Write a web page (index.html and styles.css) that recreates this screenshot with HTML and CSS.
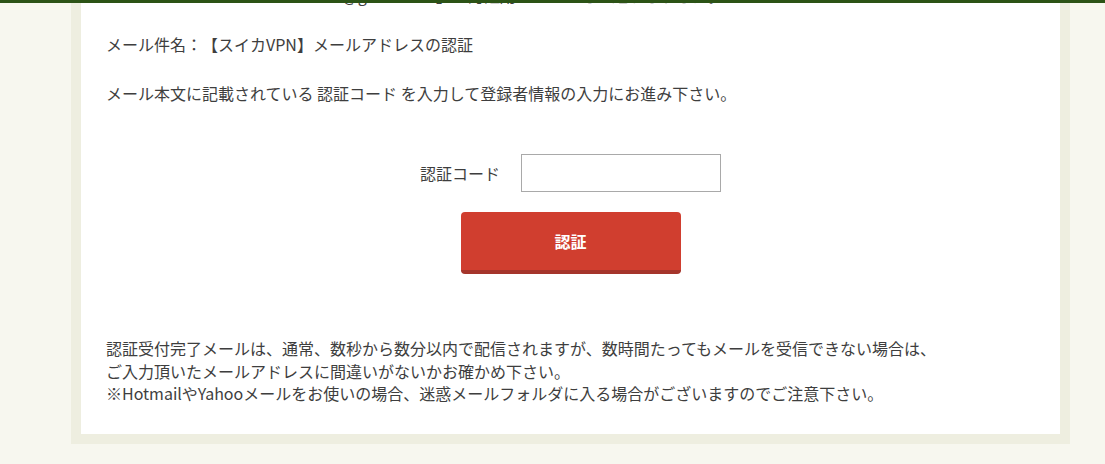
FILE: index.html
```html
<!DOCTYPE html>
<html lang="ja">
<head>
<meta charset="utf-8">
<title>メールアドレスの認証</title>
<link rel="stylesheet" href="styles.css">
</head>
<body>
<div class="topbar"></div>
<main class="card">
  <div class="intro">
    <p>メールアドレス「tokutaro20011@gmail.com」へ認証用のメールをお送りしました。</p>
    <p>メール件名：【スイカVPN】メールアドレスの認証</p>
    <p>メール本文に記載されている 認証コード を入力して登録者情報の入力にお進み下さい。</p>
  </div>
  <form class="verify">
    <div class="field">
      <label class="field-label" for="code">認証コード</label>
      <input class="field-input" id="code" type="text">
    </div>
    <button class="submit" type="button">認証</button>
  </form>
  <p class="note">認証受付完了メールは、通常、数秒から数分以内で配信されますが、数時間たってもメールを受信できない場合は、<br>ご入力頂いたメールアドレスに間違いがないかお確かめ下さい。<br>※HotmailやYahooメールをお使いの場合、迷惑メールフォルダに入る場合がございますのでご注意下さい。</p>
</main>
</body>
</html>
```

FILE: styles.css
```css
html, body {
  margin: 0;
  padding: 0;
  background: #f7f7ef;
  height: 464px;
  overflow: hidden;
}
body {
  font-family: "Noto Sans CJK JP", "Noto Sans", sans-serif;
  font-size: 16px;
  color: #3e3e3e;
  text-spacing-trim: space-all;
}
.topbar {
  position: fixed;
  top: 0;
  left: 0;
  right: 0;
  height: 3px;
  background: #2c5316;
  z-index: 10;
}
.card {
  box-sizing: border-box;
  width: 999px;
  margin: -31px 0 0 71px;
  background: #fff;
  border: 10px solid #eeeee0;
  padding: 4px 25px 29px 25px;
}
.intro p {
  margin: 0 0 25px;
  line-height: 24px;
}
.intro p:last-child {
  margin-bottom: 0;
}
.verify {
  display: flex;
  flex-direction: column;
  align-items: center;
  padding-top: 49px;
}
.field {
  display: flex;
  align-items: center;
  gap: 21px;
}
.field-label {
  line-height: 24px;
}
.field-input {
  box-sizing: border-box;
  width: 200px;
  height: 38px;
  border: 1px solid #a9a9a9;
  background: #fff;
  margin: 0;
  padding: 0 8px;
  font-size: 16px;
}
.submit {
  box-sizing: border-box;
  margin-top: 20px;
  width: 220px;
  height: 62px;
  border: 0;
  border-bottom: 4px solid #a5352b;
  border-radius: 4px;
  background: #d03e2f;
  color: #fff;
  font-family: "Noto Sans CJK JP", sans-serif;
  font-size: 16px;
  font-weight: bold;
  padding: 0;
}
.note {
  margin: 63px 0 0;
  line-height: 22.5px;
}
```
